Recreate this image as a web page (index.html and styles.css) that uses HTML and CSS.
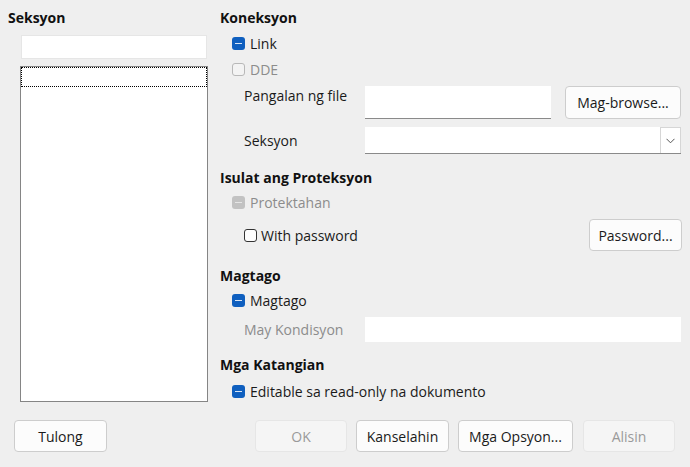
FILE: index.html
```html
<!DOCTYPE html>
<html>
<head>
<meta charset="utf-8">
<link rel="stylesheet" href="styles.css">
</head>
<body>
<div class="page">
  <div class="content">
    <div class="left">
      <div class="heading">Seksyon</div>
      <div class="name-input"></div>
      <div class="listbox"><div class="focus-row"></div></div>
    </div>
    <div class="right">
      <div class="heading">Koneksyon</div>
      <div class="cbrow r-link"><span class="cb on"></span><span>Link</span></div>
      <div class="cbrow r-dde disabled"><span class="cb off dis"></span><span>DDE</span></div>
      <div class="field r-file">
        <span class="flabel">Pangalan ng file</span>
        <div class="text-input file-input"></div>
        <button class="btn browse">Mag-browse...</button>
      </div>
      <div class="field r-sek">
        <span class="flabel">Seksyon</span>
        <div class="combo">
          <div class="combo-text"></div>
          <div class="combo-btn"><svg width="9" height="6" viewBox="0 0 9 6"><path d="M0.5 0.8 L4.5 4.8 L8.5 0.8" fill="none" stroke="#555" stroke-width="1"/></svg></div>
        </div>
      </div>
      <div class="heading h-isulat">Isulat ang Proteksyon</div>
      <div class="cbrow r-prot disabled"><span class="cb on dis"></span><span>Protektahan</span></div>
      <div class="field r-pass">
        <span class="cb off sub"></span><span class="passlabel">With password</span>
        <button class="btn password">Password...</button>
      </div>
      <div class="heading h-magtago">Magtago</div>
      <div class="cbrow r-mag"><span class="cb on"></span><span>Magtago</span></div>
      <div class="field r-kond">
        <span class="flabel grey">May Kondisyon</span>
        <div class="text-input kond-input"></div>
      </div>
      <div class="heading h-kat">Mga Katangian</div>
      <div class="cbrow r-edit"><span class="cb on"></span><span>Editable sa read-only na dokumento</span></div>
    </div>
  </div>
  <div class="footer">
    <button class="btn tulong">Tulong</button>
    <div class="spacer"></div>
    <button class="btn dbtn ok">OK</button>
    <button class="btn kansel">Kanselahin</button>
    <button class="btn opsyon">Mga Opsyon...</button>
    <button class="btn dbtn alisin">Alisin</button>
  </div>
</div>
</body>
</html>
```
FILE: styles.css
```css
html, body {
  margin: 0;
  padding: 0;
  background: #efefef;
}
body {
  font-family: "Open Sans", "Noto Sans", sans-serif;
  font-size: 14px;
  color: #1a1a1a;
  width: 690px;
  height: 467px;
  overflow: hidden;
}
.page {
  display: flex;
  flex-direction: column;
  padding-top: 8px;
}
.content {
  display: flex;
  height: 395px;
}
.heading {
  height: 20px;
  line-height: 20px;
  font-weight: 700;
  color: #111;
}
.left {
  width: 220px;
  padding-left: 8px;
  box-sizing: border-box;
  display: flex;
  flex-direction: column;
}
.name-input {
  margin-top: 7px;
  margin-left: 13px;
  width: 186px;
  height: 24px;
  background: #fff;
  border: 1px solid #e6e6e6;
  box-sizing: border-box;
}
.listbox {
  margin-top: 7px;
  margin-left: 12px;
  width: 188px;
  height: 336px;
  background: #fff;
  border: 1px solid #858585;
  box-sizing: border-box;
  padding: 0;
}
.focus-row {
  height: 20px;
  border: 1px dotted #000;
  box-sizing: border-box;
}
.right {
  width: 462px;
  display: flex;
  flex-direction: column;
}
.cbrow {
  height: 22px;
  display: flex;
  align-items: center;
  padding-left: 12px;
  gap: 5px;
}
.disabled { color: #8c8c8c; }
.cb {
  display: inline-block;
  width: 13px;
  height: 13px;
  box-sizing: border-box;
  border-radius: 3px;
  position: relative;
  flex: none;
}
.cb.on {
  background: #0f5fbf;
}
.cb.on::after {
  content: "";
  position: absolute;
  left: 3px;
  top: 6px;
  width: 7px;
  height: 1px;
  background: #d8e6f7;
}
.cb.on.dis { background: #c2c2c2; }
.cb.on.dis::after { background: #e6e6e6; }
.cb.off {
  background: #fdfdfd;
  border: 1px solid #333;
}
.cb.off.dis {
  border-color: #b8b8b8;
  background: #f3f3f3;
}
.r-link { margin-top: 4px; }
.r-dde { margin-top: 4px; }
.field {
  display: flex;
  align-items: center;
  padding-left: 24px;
}
.flabel {
  width: 121px;
  flex: none;
}
.flabel.grey { color: #8c8c8c; }
.r-file {
  margin-top: 6px;
  height: 33px;
  align-items: stretch;
}
.r-file .flabel { line-height: 20px; }
.text-input {
  background: #fff;
  box-sizing: border-box;
}
.file-input {
  width: 186px;
  border-bottom: 1px solid #8a8a8a;
}
.btn {
  font-family: inherit;
  font-size: 14px;
  color: #1a1a1a;
  background: #fcfcfc;
  border: 1px solid #cdcdcd;
  border-radius: 4px;
  box-sizing: border-box;
  padding: 0;
  margin: 0;
  height: 32px;
}
.browse {
  margin-left: 14px;
  width: 116px;
  height: 33px;
}
.r-sek {
  margin-top: 8px;
  height: 27px;
}
.combo {
  width: 316px;
  height: 27px;
  display: flex;
  background: #fff;
  border-bottom: 1px solid #8a8a8a;
  box-sizing: border-box;
}
.combo-text { flex: 1; }
.combo-btn {
  width: 21px;
  border: 1px solid #d6d6d6;
  border-bottom: none;
  box-sizing: border-box;
  display: flex;
  align-items: center;
  justify-content: center;
  background: #fff;
}
.h-isulat { margin-top: 14px; }
.r-prot { margin-top: 3px; }
.r-pass {
  margin-top: 6px;
  height: 32px;
}
.cb.sub { margin-right: 4px; }
.passlabel { flex: 1; }
.password { width: 93px; }
.h-magtago { margin-top: 15px; }
.r-mag { margin-top: 3px; }
.r-kond {
  margin-top: 6px;
  height: 25px;
}
.kond-input {
  width: 316px;
  height: 25px;
}
.h-kat { margin-top: 13px; }
.r-edit { margin-top: 5px; }
.footer {
  margin-top: 17px;
  height: 32px;
  display: flex;
  padding-left: 14px;
}
.spacer { width: 148px; }
.tulong { width: 93px; }
.dbtn {
  background: #f5f5f5;
  border-color: #e6e6e6;
  color: #9a9a9a;
}
.ok { width: 92px; }
.kansel { width: 93px; margin-left: 9px; }
.opsyon { width: 115px; margin-left: 9px; }
.alisin { width: 92px; margin-left: 10px; }
```
